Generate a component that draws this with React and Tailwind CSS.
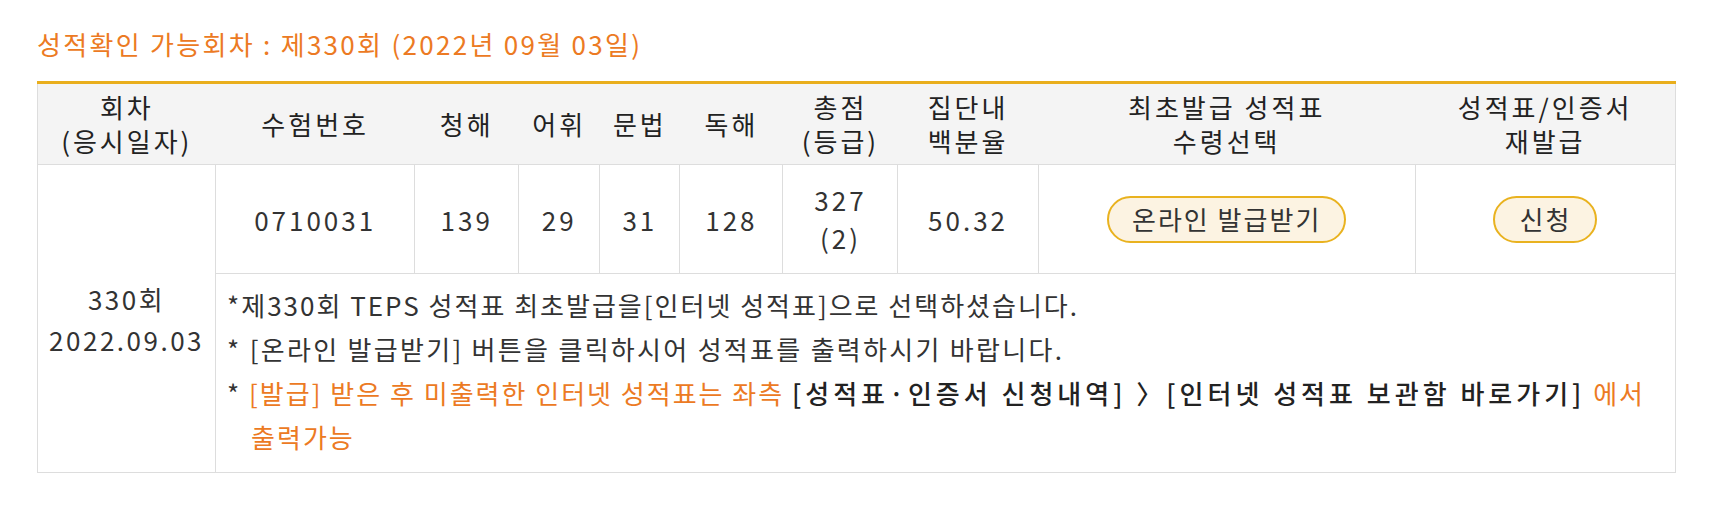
export default function App() {
  const headCls = "font-normal text-[#222] text-[26px] tracking-[3px] leading-[34px] py-[6px]";
  const cellCls = "border border-[#dddddd] text-center align-middle text-[#333]";
  const numCls = `${cellCls} tracking-[3px]`;

  return (
    <div className="min-h-[508px] bg-white pl-[37px] pt-[25px] font-['Noto_Sans_CJK_KR',sans-serif] text-[26px] tracking-[2px]">
      {/* 회차 안내 */}
      <h2 className="mb-[19px] text-[26px] leading-[37px] font-normal tracking-[2.3px] text-[#ec7a23]">
        성적확인 가능회차 : 제330회 (2022년 09월 03일)
      </h2>

      <table className="table-fixed border-collapse w-[1639px] border-t-[3px] border-t-[#e9ae1c]">
        <thead className="bg-[#f4f4f4]">
          <tr className="h-[79px] border-x border-[#dddddd] border-b">
            <th className={`${headCls} w-[178px]`}>회차<br />(응시일자)</th>
            <th className={`${headCls} w-[199px]`}>수험번호</th>
            <th className={`${headCls} w-[104px]`}>청해</th>
            <th className={`${headCls} w-[81px]`}>어휘</th>
            <th className={`${headCls} w-[80px]`}>문법</th>
            <th className={`${headCls} w-[103px]`}>독해</th>
            <th className={`${headCls} w-[115px]`}>총점<br />(등급)</th>
            <th className={`${headCls} w-[140px]`}>집단내<br />백분율</th>
            <th className={`${headCls} w-[377px]`}>최초발급 성적표<br />수령선택</th>
            <th className={`${headCls} w-[260px]`}>성적표/인증서<br />재발급</th>
          </tr>
        </thead>
        <tbody>
          <tr className="h-[109px]">
            <td rowSpan={2} className={`${cellCls} tracking-[2.5px] leading-[41px]`}>
              330회<br />2022.09.03
            </td>
            <td className={numCls}>0710031</td>
            <td className={numCls}>139</td>
            <td className={numCls}>29</td>
            <td className={numCls}>31</td>
            <td className={numCls}>128</td>
            <td className={`${numCls} leading-[38px]`}>327<br />(2)</td>
            <td className={numCls}>50.32</td>
            <td className={cellCls}>
              <button className="h-[47px] rounded-full border-2 border-[#e9b21f] bg-[#fcf3e2] px-[23px] text-[26px] leading-none tracking-[2px] text-[#333]">
                온라인 발급받기
              </button>
            </td>
            <td className={cellCls}>
              <button className="h-[47px] rounded-full border-2 border-[#e9b21f] bg-[#fcf3e2] px-[24px] text-[26px] leading-none tracking-[2px] text-[#333]">
                신청
              </button>
            </td>
          </tr>
          <tr className="h-[199px]">
            <td colSpan={9} className="border border-[#dddddd] px-[11px] py-[9px] align-top text-[#333] leading-[44px]">
              <p>*제330회 TEPS 성적표 최초발급을[인터넷 성적표]으로 선택하셨습니다.</p>
              <p className="tracking-[2.3px]">* [온라인 발급받기] 버튼을 클릭하시어 성적표를 출력하시기 바랍니다.</p>
              <p className="whitespace-nowrap pl-[24px] -indent-[24px]">
                *{" "}
                <span className="text-[#ec7a23]">[발급] 받은 후 미출력한 인터넷 성적표는 좌측 </span>
                <span className="font-medium tracking-[4px] text-[#222]">
                  [성적표·인증서 신청내역] 〉[인터넷 성적표 보관함 바로가기]
                </span>
                <span className="text-[#ec7a23]"> 에서<br />출력가능</span>
              </p>
            </td>
          </tr>
        </tbody>
      </table>
    </div>
  );
}
